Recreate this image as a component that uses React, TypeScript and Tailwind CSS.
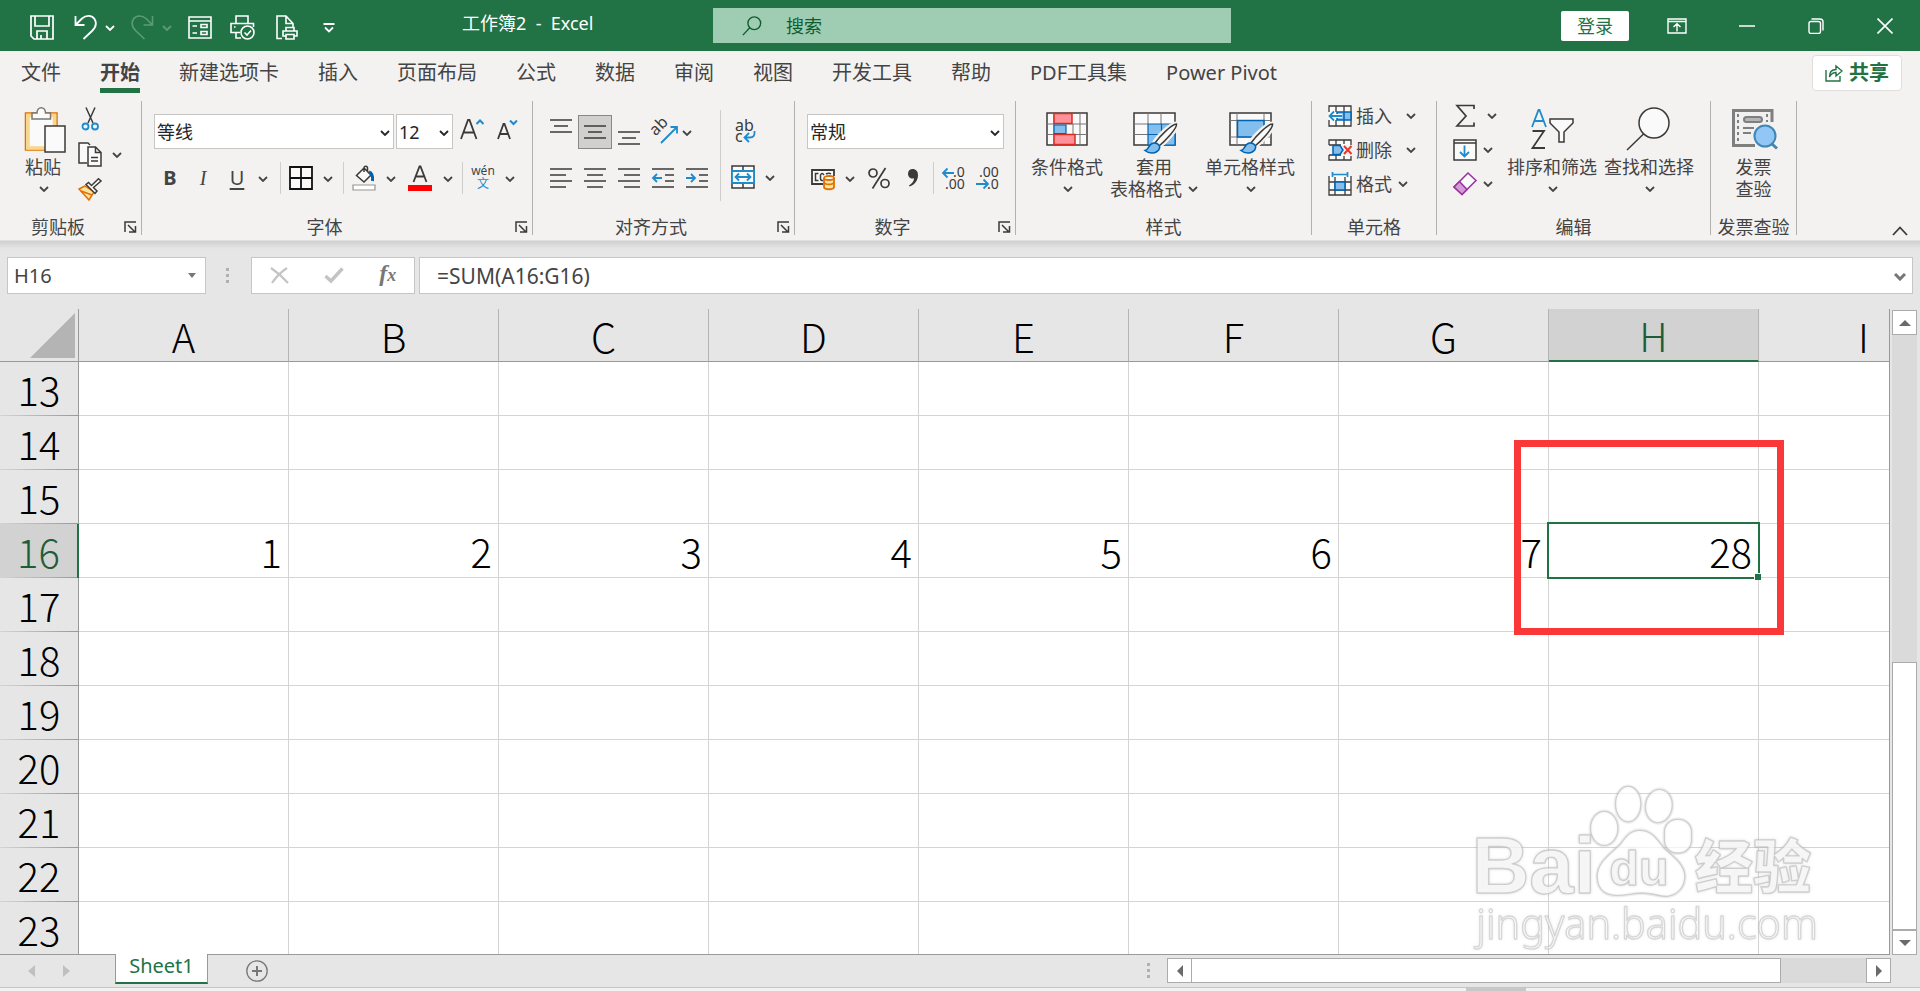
import type { ReactNode } from "react";
import clsx from "clsx";

const TABS = [
  "文件",
  "开始",
  "新建选项卡",
  "插入",
  "页面布局",
  "公式",
  "数据",
  "审阅",
  "视图",
  "开发工具",
  "帮助",
  "PDF工具集",
  "Power Pivot",
];

const COLUMNS = ["A", "B", "C", "D", "E", "F", "G", "H", "I"];
const ROWS = [13, 14, 15, 16, 17, 18, 19, 20, 21, 22, 23];
const CELLS: Record<string, number> = {
  A16: 1,
  B16: 2,
  C16: 3,
  D16: 4,
  E16: 5,
  F16: 6,
  G16: 7,
  H16: 28,
};

const ACTIVE_COLUMN = "H";
const ACTIVE_ROW = 16;

interface IconProps {
  w: number;
  h: number;
  children: ReactNode;
}

function Icon({ w, h, children }: IconProps) {
  return (
    <svg
      width={w}
      height={h}
      viewBox={`0 0 ${w} ${h}`}
      fill="none"
      stroke="#3b3a39"
      strokeWidth="1.5"
      className="shrink-0 overflow-visible"
      aria-hidden="true"
    >
      {children}
    </svg>
  );
}

function Chevron({ className }: { className?: string }) {
  return (
    <svg
      width="10"
      height="6"
      viewBox="0 0 10 6"
      fill="none"
      stroke="currentColor"
      strokeWidth="1.8"
      className={clsx("shrink-0", className)}
      aria-hidden="true"
    >
      <path d="M1 1 L5 5 L9 1" />
    </svg>
  );
}

function Drop({ label, className = "w-[30px]" }: { label: string; className?: string }) {
  return (
    <button
      type="button"
      aria-label={label}
      className={clsx("flex h-8 shrink-0 items-center justify-center pt-0.5", className)}
    >
      <Chevron />
    </button>
  );
}

function Tool({
  label,
  className = "w-[34px]",
  children,
}: {
  label: string;
  className?: string;
  children: ReactNode;
}) {
  return (
    <button
      type="button"
      aria-label={label}
      className={clsx("flex h-[34px] shrink-0 items-center justify-center", className)}
    >
      {children}
    </button>
  );
}

function Sep({ className }: { className?: string }) {
  return <span className={clsx("mr-2 h-8 w-px shrink-0 bg-[#d0cecc]", className)} />;
}

function Group({
  label,
  className,
  launcher = false,
  children,
}: {
  label: string;
  className: string;
  launcher?: boolean;
  children: ReactNode;
}) {
  return (
    <section
      aria-label={label}
      className={clsx("flex h-[134px] shrink-0 flex-col border-r border-[#b3b1af]", className)}
    >
      <div className="flex flex-1">{children}</div>
      <div className="flex h-4 items-center">
        <h2 className={clsx("flex-1 text-center text-lg leading-4", launcher && "pr-2")}>{label}</h2>
        {launcher && (
          <button type="button" aria-label={`${label}设置`} className="mr-1">
            <Icon w={13} h={12}>
              <path d="M1 11 V1 H12" />
              <path d="M4 4 L10.5 10.5 M11.5 5 V11 H5" />
            </Icon>
          </button>
        )}
      </div>
    </section>
  );
}

function BigButton({
  icon,
  lines,
  inlineChevron = false,
  noChevron = false,
}: {
  icon: ReactNode;
  lines: string[];
  inlineChevron?: boolean;
  noChevron?: boolean;
}) {
  return (
    <button type="button" className="flex flex-col items-center pt-1 text-lg leading-[22px]">
      <span className="flex h-[51px] items-center">{icon}</span>
      {lines.map((line, index) => (
        <span key={line} className="flex items-center gap-1.5 whitespace-nowrap">
          {line}
          {inlineChevron && index === lines.length - 1 && <Chevron />}
        </span>
      ))}
      {!inlineChevron && !noChevron && (
        <span className="flex h-[22px] items-center pl-0.5">
          <Chevron />
        </span>
      )}
    </button>
  );
}

function SelectBox({ label, value, className }: { label: string; value: string; className: string }) {
  return (
    <div className={clsx("relative h-[35px] shrink-0", className)}>
      <select
        aria-label={label}
        className="h-full w-full appearance-none border border-[#c8c6c4] bg-white pl-0.5 text-lg text-[#262626]"
      >
        <option>{value}</option>
      </select>
      <Chevron className="pointer-events-none absolute top-4 right-1 text-[#262626]" />
    </div>
  );
}

/* Horizontal rules; each entry is [x1, x2] on a 22px wide canvas. */
function Lines({ rows, gap = 6 }: { rows: number[][]; gap?: number }) {
  return (
    <Icon w={22} h={(rows.length - 1) * gap + 2}>
      {rows.map(([from, to], index) => (
        <path key={index} d={`M${from} ${index * gap + 1} H${to}`} />
      ))}
    </Icon>
  );
}

function Brush() {
  return (
    <g>
      <path
        d="M43 12 C38 12 25 25 22 30 L26 34 C32 30 44 17 44 13 Z"
        fill="#fafafa"
        stroke="#f3f2f1"
        strokeWidth="5"
      />
      <path d="M43.5 12 C39 12 27 24 22 31 L25.5 34.5 C32 29 44.5 16 43.5 12 Z" fill="#fafafa" />
      <path
        d="M12 38.5 C16 38 15 32 20.5 31 C25 30.5 28 34 26 37.5 C23 42 16 42 12 38.5 Z"
        fill="#83beec"
        stroke="#0063b1"
      />
    </g>
  );
}

function QuickAccess() {
  return (
    <div className="flex w-[432px] shrink-0 items-center gap-4">
      <button type="button" aria-label="保存" className="w-7">
        <svg width="24" height="25" viewBox="0 0 24 25" fill="none" stroke="#fff" strokeWidth="1.7">
          <path d="M1 1 H23 V24 H4 L1 21 Z M5 1 V11 H19 V1 M7 24 V16 H17 V24 M11 20 V24" />
        </svg>
      </button>
      <div className="flex w-[41px] items-center gap-2">
        <button type="button" aria-label="撤消">
          <svg width="23" height="25" viewBox="0 0 23 25" fill="none" stroke="#fff" strokeWidth="1.8">
            <path d="M1.5 1 V10 H10.5 M2 9.5 L8 3.5 C12 0 18 0 20.5 4 C23 8 22 12 18 16 L9.5 24" />
          </svg>
        </button>
        <button type="button" aria-label="撤消选项">
          <Chevron />
        </button>
      </div>
      <div className="flex w-[41px] items-center gap-2 text-[#5a9c76]">
        <button type="button" aria-label="恢复">
          <svg
            width="23"
            height="25"
            viewBox="0 0 23 25"
            fill="none"
            stroke="currentColor"
            strokeWidth="1.6"
          >
            <path d="M21.5 1 V10 H12.5 M21 9.5 L15 3.5 C11 0 5 0 2.5 4 C0 8 1 12 5 16 L13.5 24" />
          </svg>
        </button>
        <button type="button" aria-label="恢复选项">
          <Chevron />
        </button>
      </div>
      <button type="button" aria-label="表单" className="w-[26px]">
        <svg width="24" height="23" viewBox="0 0 24 23" fill="none" stroke="#fff" strokeWidth="1.6">
          <path d="M1 1 H23 V22 H1 Z M1 5 H23 M4.5 10 H9 M4.5 17 H9" />
          <path d="M13 8.5 H19 V11.5 H13 Z M13 15.5 H19 V18.5 H13 Z" />
        </svg>
      </button>
      <button type="button" aria-label="打印预览" className="w-[30px]">
        <svg width="25" height="25" viewBox="0 0 25 25" fill="none" stroke="#fff" strokeWidth="1.6">
          <path d="M6 8 V1 H18 V8 M10 17.5 H6 V23 H11 M6 17.5 H1 V8.5 H23.5 V12 M4 12 H5.5" />
          <circle cx="17.5" cy="17.5" r="6.5" />
          <path d="M14.5 17.5 L17 20 L21 15.5" />
        </svg>
      </button>
      <button type="button" aria-label="快速打印" className="w-[31px]">
        <svg width="22" height="25" viewBox="0 0 22 25" fill="none" stroke="#fff" strokeWidth="1.6">
          <path d="M6 23.5 H1 V1 H10 L17 8.5 V12 M10 1 V8.5 H17" />
          <path d="M10 16 V12.5 H18 V16 M10 21 H7 V16 H21 V21 H18 M10 19.5 H18 V24 H10 Z" />
        </svg>
      </button>
      <button type="button" aria-label="自定义快速访问工具栏">
        <svg width="12" height="10" viewBox="0 0 12 10" fill="none" stroke="#fff" strokeWidth="1.8">
          <path d="M0.5 1 H11.5 M2 4.5 L6 8.5 L10 4.5" />
        </svg>
      </button>
    </div>
  );
}

function TitleBar() {
  return (
    <header className="flex h-[51px] shrink-0 items-center bg-[#217346] text-white">
      <div className="flex w-[713px] shrink-0 items-center pt-1 pl-[30px]">
        <QuickAccess />
        <h1 className="pb-2.5 text-lg leading-6 whitespace-pre">{"工作簿2  -  Excel"}</h1>
      </div>
      <label className="flex h-[35px] w-[27%] items-center bg-[#9fcdb3] pl-[29px] text-[#0f5c2f]">
        <svg width="22" height="22" viewBox="0 0 22 22" fill="none" stroke="currentColor" strokeWidth="1.5">
          <circle cx="13.5" cy="8" r="7" />
          <path d="M8.5 13 L1 21" />
        </svg>
        <input
          type="text"
          aria-label="搜索"
          placeholder="搜索"
          className="ml-6 w-full min-w-0 bg-transparent text-lg outline-none placeholder:text-[#0f5c2f]"
        />
      </label>
      <div className="ml-auto flex items-center pr-[27px]">
        <button
          type="button"
          className="mr-[38px] h-[30px] w-[68px] rounded-xs bg-white text-lg leading-[30px] text-[#217346]"
        >
          登录
        </button>
        <button type="button" aria-label="功能区显示选项" className="mr-[52px]">
          <svg width="20" height="16" viewBox="0 0 20 16" fill="none" stroke="#fff" strokeWidth="1.4">
            <path d="M1 1 H19 V15 H1 Z M1 3.5 H19 M10 13.5 V6 M6.5 9 L10 5.8 L13.5 9" />
          </svg>
        </button>
        <button type="button" aria-label="最小化" className="mr-[53px]">
          <svg width="16" height="16" viewBox="0 0 16 16" fill="none" stroke="#fff" strokeWidth="1.5">
            <path d="M0 8 H16" />
          </svg>
        </button>
        <button type="button" aria-label="还原" className="mr-[53px]">
          <svg width="16" height="16" viewBox="0 0 16 16" fill="none" stroke="#fff" strokeWidth="1.4">
            <rect x="1" y="3.5" width="11.5" height="12" rx="2" />
            <path d="M3.5 1 H12 Q15 1 15 4 V12.5" />
          </svg>
        </button>
        <button type="button" aria-label="关闭">
          <svg width="16" height="16" viewBox="0 0 16 16" fill="none" stroke="#fff" strokeWidth="1.6">
            <path d="M0.5 0.5 L15.5 15.5 M15.5 0.5 L0.5 15.5" />
          </svg>
        </button>
      </div>
    </header>
  );
}

function TabBar() {
  return (
    <div className="flex h-11 shrink-0 items-center pr-[18px] pl-[21px]">
      <nav className="flex h-full gap-[39px] text-xl">
        {TABS.map((tab) => (
          <button
            key={tab}
            type="button"
            className={clsx("flex h-full items-center whitespace-nowrap", tab === "开始" && "font-bold")}
          >
            <span
              className={clsx(
                "flex h-10 items-center border-y-[5px] border-transparent",
                tab === "开始" && "border-b-[#217346]"
              )}
            >
              {tab}
            </span>
          </button>
        ))}
      </nav>
      <button
        type="button"
        className="ml-auto flex h-9 w-[90px] items-center justify-center gap-1.5 rounded border border-[#e1dfdd] bg-white text-xl font-bold text-[#217346]"
      >
        <svg width="18" height="18" viewBox="0 0 18 18" fill="none" stroke="currentColor" strokeWidth="1.4">
          <path d="M1 6 V17 H15 V12 M4.5 13 C4.5 8 7 5.5 11 5.5 V2 L17 7 L11 12 V8.5 C8 8.5 6 10 4.5 13 Z" />
        </svg>
        共享
      </button>
    </div>
  );
}

function ClipboardGroup() {
  return (
    <Group label="剪贴板" className="w-[142px]" launcher>
      <div className="pl-[23px]">
        <BigButton
          lines={["粘贴"]}
          icon={
            <Icon w={40} h={48}>
              <path d="M2.5 6 H34 V43 H2.5 Z" fill="#fff" stroke="#e07000" />
              <path d="M5 8.5 H31.5 V41 H5 Z" fill="#fafafa" stroke="#f8d888" strokeWidth="3.5" />
              <path d="M9 12 V6 H14 C14 -1 22.5 -1 22.5 6 H27.5 V12 Z" fill="#fafafa" stroke="#797775" />
              <path d="M22 19 H42 V45 H22 Z" fill="#fafafa" />
            </Icon>
          }
        />
      </div>
      <div className="flex flex-col gap-px pt-px pl-[15px]">
        <Tool label="剪切" className="w-6">
          <Icon w={24} h={24}>
            <path d="M8 0.5 L15 16 M17 0.5 L10 16" />
            <circle cx="7.5" cy="19.5" r="3" stroke="#1e8bcd" strokeWidth="1.8" />
            <circle cx="17" cy="19.5" r="3" stroke="#1e8bcd" strokeWidth="1.8" />
          </Icon>
        </Tool>
        <div className="flex items-center">
          <Tool label="复制" className="w-6">
            <Icon w={24} h={25}>
              <path d="M9 21 H1 V1 H10 L12 3" fill="#fafafa" />
              <path d="M10 5 H17.5 L23 10.5 V24 H10 Z" fill="#fafafa" />
              <path d="M17.5 5 V10.5 H23 M13 15.5 H20 M13 19 H20" />
            </Icon>
          </Tool>
          <Drop label="复制选项" />
        </div>
        <Tool label="格式刷" className="w-6">
          <Icon w={24} h={23}>
            <path d="M7 8 L1 11 L11 22 L16 14 Z" fill="#fbe3a6" stroke="#e07000" />
            <path d="M3 13 L14 17" stroke="#e07000" />
            <path d="M8 6.5 L17 15.5 L19 13 L15.5 9.5 L23 3 L20.5 0.8 L13.5 7.5 L10.5 4.5 Z" fill="#fafafa" />
          </Icon>
        </Tool>
      </div>
    </Group>
  );
}

function FontGroup() {
  return (
    <Group label="字体" className="w-[391px]" launcher>
      <div className="flex flex-col gap-3 pt-[13px] pl-3">
        <div className="flex items-center">
          <SelectBox label="字体名称" value="等线" className="mr-0.5 w-[240px]" />
          <SelectBox label="字号" value="12" className="w-[57px]" />
          <Tool label="增大字号" className="w-[38px]">
            <Icon w={24} h={26}>
              <path d="M1 20 L8 1 H9.5 L16.5 20 M3.5 13.5 H14" strokeWidth="1.8" />
              <path d="M16.5 5 L20 1.5 L23.5 5" stroke="#1e8bcd" strokeWidth="2" />
            </Icon>
          </Tool>
          <Tool label="减小字号" className="w-8">
            <Icon w={20} h={26}>
              <path d="M1 20 L6.5 5 H7.5 L13 20 M3 15 H11" strokeWidth="1.8" />
              <path d="M13 1.5 L16.5 5 L20 1.5" stroke="#1e8bcd" strokeWidth="2" />
            </Icon>
          </Tool>
        </div>
        <div className="flex items-center">
          <Tool label="加粗" className="w-8">
            <span className="text-xl leading-6 font-bold">B</span>
          </Tool>
          <Tool label="倾斜">
            <span className="font-['Liberation_Serif',serif] text-xl leading-6 italic">I</span>
          </Tool>
          <Tool label="下划线">
            <span className="text-xl leading-6 underline underline-offset-3">U</span>
          </Tool>
          <Drop label="下划线样式" className="w-[18px]" />
          <Sep className="ml-2" />
          <Tool label="边框" className="w-6">
            <Icon w={24} h={24}>
              <path d="M1 1 H23 V23 H1 Z M12 1 V23 M1 12 H23" fill="#fafafa" stroke="#111" strokeWidth="1.8" />
            </Icon>
          </Tool>
          <Drop label="边框选项" />
          <Sep />
          <Tool label="填充颜色" className="w-6">
            <Icon w={24} h={26}>
              <path d="M12 3 L19 10 L12 17 L4.5 10.5 Z M12 7 V3 C12 0.5 15.5 0.5 15.5 3 V7" fill="#fafafa" />
              <path d="M17 7 C20 8 21 11 20.5 16" stroke="#0063b1" strokeWidth="3" />
              <path d="M1 20 H23 V25 H1 Z" fill="#fff" stroke="#979593" strokeWidth="1.2" />
            </Icon>
          </Tool>
          <Drop label="填充颜色选项" />
          <Tool label="字体颜色" className="w-7">
            <Icon w={24} h={26}>
              <path d="M5.5 17 L11.5 1.5 H12.5 L18.5 17 M7.5 11.5 H16.5" strokeWidth="1.8" />
              <path d="M0 20 H24 V26 H0 Z" fill="#f00" stroke="none" />
            </Icon>
          </Tool>
          <Drop label="字体颜色选项" className="w-7" />
          <Sep />
          <Tool label="拼音" className="w-6 flex-col">
            <span className="text-xs leading-3">wén</span>
            <span className="text-xs leading-[14px] text-[#1e8bcd]">文</span>
          </Tool>
          <Drop label="拼音选项" />
        </div>
      </div>
    </Group>
  );
}

function AlignGroup() {
  return (
    <Group label="对齐方式" className="w-[262px]" launcher>
      <div className="flex w-[187px] flex-col gap-3 pt-[13px] pl-[11px]">
        <div className="flex h-[35px] items-center">
          <Tool label="顶端对齐" className="w-[34px] pb-3">
            <Lines rows={[[0, 22], [4, 18], [0, 22]]} />
          </Tool>
          <Tool label="垂直居中" className="w-[34px] border border-[#8a8886] bg-[#d2d0ce]">
            <Lines rows={[[0, 22], [4, 18], [0, 22]]} />
          </Tool>
          <Tool label="底端对齐" className="w-[34px] pt-3">
            <Lines rows={[[0, 22], [4, 18], [0, 22]]} />
          </Tool>
          <Tool label="方向" className="w-9">
            <Icon w={25} h={26}>
              <text
                x="3"
                y="16"
                transform="rotate(-45 5 16)"
                fontSize="16"
                fill="#3b3a39"
                stroke="none"
              >
                ab
              </text>
              <path d="M9 24 L24.5 8.5 M18.5 8 H25 V14.5" stroke="#1e8bcd" strokeWidth="1.8" />
            </Icon>
          </Tool>
          <Drop label="方向选项" className="w-2.5" />
        </div>
        <div className="flex items-center">
          <Tool label="左对齐">
            <Lines rows={[[0, 22], [0, 16], [0, 22], [0, 16]]} />
          </Tool>
          <Tool label="居中">
            <Lines rows={[[0, 22], [3, 19], [0, 22], [3, 19]]} />
          </Tool>
          <Tool label="右对齐">
            <Lines rows={[[0, 22], [6, 22], [0, 22], [6, 22]]} />
          </Tool>
          <Tool label="减少缩进量">
            <Icon w={22} h={20}>
              <path d="M0 1 H22 M13 7 H22 M13 13 H22 M0 19 H22" />
              <path d="M10 10 H1 M5 6 L1 10 L5 14" stroke="#1e8bcd" strokeWidth="1.8" />
            </Icon>
          </Tool>
          <Tool label="增加缩进量">
            <Icon w={22} h={20}>
              <path d="M0 1 H22 M13 7 H22 M13 13 H22 M0 19 H22" />
              <path d="M0 10 H9 M5 6 L9 10 L5 14" stroke="#1e8bcd" strokeWidth="1.8" />
            </Icon>
          </Tool>
        </div>
      </div>
      <span className="mt-[9px] mr-2.5 h-[91px] w-px bg-[#d0cecc]" />
      <div className="flex flex-col gap-3 pt-[13px]">
        <Tool label="自动换行" className="w-7">
          <Icon w={20} h={24}>
            <text x="0" y="12" fontSize="16" fill="#3b3a39" stroke="none">ab</text>
            <text x="0" y="23" fontSize="16" fill="#3b3a39" stroke="none">c</text>
            <path
              d="M19.5 12 V14 Q19.5 18.5 15 18.5 H9.5 M14 14 L9.5 18.5 L14 23"
              stroke="#1e8bcd"
              strokeWidth="1.8"
            />
          </Icon>
        </Tool>
        <div className="flex items-center">
          <Tool label="合并后居中" className="w-6">
            <Icon w={24} h={24}>
              <path d="M1 1 H23 V23 H1 Z M12 1 V5 M12 19 V23" fill="#fafafa" />
              <path d="M1 6 H23 V18 H1 Z" fill="#fafafa" stroke="#1e8bcd" strokeWidth="1.8" />
              <path d="M4.5 12 H19.5 M8 8.5 L4.5 12 L8 15.5 M16 8.5 L19.5 12 L16 15.5" stroke="#1e8bcd" strokeWidth="1.8" />
            </Icon>
          </Tool>
          <Drop label="合并选项" />
        </div>
      </div>
    </Group>
  );
}

function NumberGroup() {
  return (
    <Group label="数字" className="w-[221px]" launcher>
      <div className="flex flex-col gap-3 pt-[13px] pl-3">
        <SelectBox label="数字格式" value="常规" className="w-[197px]" />
        <div className="flex items-center pl-1">
          <Tool label="会计数字格式" className="w-6">
            <Icon w={24} h={18}>
              <path d="M12 15 H1 V1 H23 V7" fill="#fafafa" strokeWidth="1.8" />
              <path d="M7.5 4.5 H4.5 V11.5 H7.5 M13 6 Q11 3 9.5 6 V10 Q10 12 12 11.5 M15 5 Q18 3.5 20 5" />
              <path d="M13 9 V18 C13 21 23 21 23 18 V9" fill="#fbe3a6" stroke="#e07000" strokeWidth="1.8" />
              <ellipse cx="18" cy="9" rx="5" ry="2" fill="#fff" stroke="#e07000" strokeWidth="1.8" />
              <path d="M13 13.5 C14 16 22 16 23 13.5" stroke="#e07000" strokeWidth="1.8" />
            </Icon>
          </Tool>
          <Drop label="会计格式选项" />
          <Tool label="百分比样式" className="w-7">
            <Icon w={22} h={22}>
              <circle cx="5" cy="6" r="4" strokeWidth="1.7" />
              <circle cx="17" cy="16.5" r="4" strokeWidth="1.7" />
              <path d="M17.5 1 L4.5 21.5" strokeWidth="1.7" />
            </Icon>
          </Tool>
          <Tool label="千位分隔样式" className="w-10">
            <Icon w={12} h={20}>
              <path
                d="M5.5 1 C9 1 11 3.5 11 7 C11 12.5 8 16.5 2.5 18.5 L2 17.5 C5.5 15.5 7 13 7 10.3 C4 11.5 1 9 1 5.8 C1 3 3 1 5.5 1 Z"
                fill="#3b3a39"
                stroke="none"
              />
            </Icon>
          </Tool>
          <Sep />
          <Tool label="增加小数位数" className="w-6">
            <Icon w={24} h={24}>
              <path d="M12 7 H1 M5.5 2.5 L1 7 L5.5 11.5" stroke="#1e8bcd" strokeWidth="1.8" />
              <text x="11" y="11" fontSize="14" fill="#3b3a39" stroke="none">.0</text>
              <text x="3" y="23" fontSize="14" fill="#3b3a39" stroke="none">.00</text>
            </Icon>
          </Tool>
          <Tool label="减少小数位数" className="ml-2.5 w-6">
            <Icon w={24} h={24}>
              <text x="3" y="11" fontSize="14" fill="#3b3a39" stroke="none">.00</text>
              <text x="11" y="23" fontSize="14" fill="#3b3a39" stroke="none">.0</text>
              <path d="M0 18 H12 M7.5 13.5 L12 18 L7.5 22.5" stroke="#1e8bcd" strokeWidth="1.8" />
            </Icon>
          </Tool>
        </div>
      </div>
    </Group>
  );
}

function StylesGroup() {
  return (
    <Group label="样式" className="w-[296px]">
      <div className="flex items-start gap-[7px] pl-[15px]">
        <BigButton
          lines={["条件格式"]}
          icon={
            <Icon w={42} h={38}>
              <path d="M1 1 H41 V33 H1 Z" fill="#fafafa" />
              <path d="M8 1 V33 M27 12 V22 M34 1 V33 M1 12 H41 M1 22.5 H41" stroke="#797775" strokeWidth="1" />
              <path d="M8 1.5 H26 V11.5 H8 Z M8 22.5 H29 V32.5 H8 Z" fill="#ff9199" stroke="#d92c20" />
              <path d="M8 13 H20 V21.5 H8 Z" fill="#83beec" stroke="#0063b1" strokeWidth="1.2" />
            </Icon>
          }
        />
        <BigButton
          lines={["套用", "表格格式"]}
          inlineChevron
          icon={
            <Icon w={42} h={38}>
              <path d="M1 1 H42 V33 H1 Z" fill="#fafafa" />
              <path d="M15 12 H42 V33 H15 Z" fill="#83beec" stroke="none" />
              <path d="M15 1 V12 M28 1 V12 M1 12 H15 M1 22.5 H15" stroke="#797775" strokeWidth="1" />
              <path d="M15 12 H42 V33 H15 Z M15 22.5 H42 M28.5 12 V33" stroke="#0063b1" strokeWidth="1.2" />
              <Brush />
            </Icon>
          }
        />
        <BigButton
          lines={["单元格样式"]}
          icon={
            <Icon w={42} h={38}>
              <path d="M1 1 H42 V33 H1 Z" fill="#fafafa" />
              <path d="M8 1 V33 M35 1 V33 M1 8.5 H42 M1 25 H42" stroke="#797775" strokeWidth="1" />
              <path d="M8.5 8.5 H35 V25 H8.5 Z" fill="#83beec" stroke="#0063b1" />
              <Brush />
            </Icon>
          }
        />
      </div>
    </Group>
  );
}

function CellsGroup() {
  return (
    <Group label="单元格" className="w-[125px]">
      <div className="flex flex-col gap-1 pl-4 text-lg">
        <button type="button" className="flex h-[30px] items-center gap-1">
          <Icon w={24} h={22}>
            <path d="M1 7 V1 H23 V21 H1 V15 M1 1 H23 M1 21 H23 M8 1 V7 M16 1 V7 M8 15 V21 M16 15 V21" fill="#fafafa" strokeWidth="1.3" />
            <path d="M9 7 H23 V15 H9 Z M16 7 V15" fill="#83beec" stroke="#0063b1" />
            <path d="M14 11 H1.5 M6 6.5 L1.5 11 L6 15.5" stroke="#fafafa" strokeWidth="4" />
            <path d="M14 11 H1.5 M6 6.5 L1.5 11 L6 15.5" stroke="#1e8bcd" strokeWidth="1.8" />
          </Icon>
          插入
          <Chevron className="ml-2.5" />
        </button>
        <button type="button" className="flex h-[30px] items-center gap-1">
          <Icon w={24} h={22}>
            <path d="M1 6 V1 H23 V6 M1 16 V21 H23 V17 M1 6 H13 M1 16 H13 M8 1 V6 M16 1 V5 M8 16 V21 M16 17 V21" fill="#fafafa" strokeWidth="1.3" />
            <path d="M5 6.5 H12 L15 11 L12 15.5 H5 Z" fill="#83beec" stroke="#0063b1" />
            <path d="M16 7 L23.5 15 M23.5 7 L16 15" stroke="#e8362d" strokeWidth="2" />
          </Icon>
          删除
          <Chevron className="ml-2.5" />
        </button>
        <button type="button" className="flex h-[30px] items-center gap-1">
          <Icon w={24} h={24}>
            <path d="M1 4 V23 H23 V4 M1 10 H23 M1 18 H23 M7 5 V23 M17 5 V23" fill="#fafafa" strokeWidth="1.3" />
            <path d="M7 10 H17 V18 H7 Z" fill="#83beec" stroke="#0063b1" />
            <path d="M4.5 2.5 H19.5 M4.5 0 V5 M19.5 0 V5" stroke="#1e8bcd" strokeWidth="1.7" />
          </Icon>
          格式
          <Chevron className="ml-0.5" />
        </button>
      </div>
    </Group>
  );
}

function EditGroup() {
  return (
    <Group label="编辑" className="w-[274px]">
      <div className="flex flex-col gap-1 pl-4">
        <button type="button" aria-label="自动求和" className="flex h-[30px] items-center gap-2.5">
          <Icon w={24} h={24}>
            <path d="M21 5 V1.5 H4 L13 12 L4 22 H21 V18.5" strokeWidth="1.7" />
          </Icon>
          <Chevron />
        </button>
        <button type="button" aria-label="填充" className="flex h-[30px] items-center gap-1.5">
          <Icon w={24} h={22}>
            <path d="M1 1 H23 V21 H1 Z M1 4 H23" fill="#fafafa" />
            <path d="M11.5 6.5 V17.5 M7 13 L11.5 17.5 L16 13" stroke="#1e8bcd" strokeWidth="1.8" />
          </Icon>
          <Chevron />
        </button>
        <button type="button" aria-label="清除" className="flex h-[30px] items-center gap-1.5">
          <Icon w={24} h={24}>
            <path d="M15 1 L23 8.5 L9 22.5 L1 15 Z" fill="#fafafa" stroke="#98309c" />
            <path d="M6.5 9.5 L14 17.5 L9 22.5 L1 15 Z" fill="#d59ad8" stroke="#98309c" />
          </Icon>
          <Chevron />
        </button>
      </div>
      <div className="flex items-start gap-[7px] pl-2.5">
        <BigButton
          lines={["排序和筛选"]}
          icon={
            <Icon w={43} h={46}>
              <path d="M1 19 L7.5 2 H8.5 L15 19 M3 13 H13" stroke="#1e8bcd" strokeWidth="1.8" />
              <path d="M1.5 23 H13 L1.5 40 H14" strokeWidth="1.8" />
              <path d="M19 11 H42 V15 L33 24 V34 H28 V24 L19 15 Z" fill="#fafafa" />
            </Icon>
          }
        />
        <BigButton
          lines={["查找和选择"]}
          icon={
            <Icon w={44} h={48}>
              <circle cx="27" cy="16" r="15" fill="#fafafa" />
              <path d="M16.5 27 L0 43" />
            </Icon>
          }
        />
      </div>
    </Group>
  );
}

function InvoiceGroup() {
  return (
    <Group label="发票查验" className="w-[86px]">
      <div className="flex flex-1 items-start justify-center">
        <BigButton
          lines={["发票", "查验"]}
          noChevron
          icon={
            <Icon w={48} h={46}>
              <path d="M42 14 V2.5 H3.5 V37.5 H25" fill="#f0f0f0" stroke="#7f7f7f" strokeWidth="3" />
              <path d="M8 6 V35 M37 6 V14" stroke="#7f7f7f" strokeWidth="2" strokeDasharray="3 3" />
              <rect x="14" y="9" width="18" height="5" rx="2.5" fill="#b5b5b5" stroke="#7f7f7f" strokeWidth="2" />
              <path d="M13 20 H24 M13 25 H21" stroke="#7f7f7f" strokeWidth="2" />
              <circle cx="35" cy="28" r="10.5" fill="#92c7f5" stroke="#3f87b5" strokeWidth="2" />
              <path d="M42 36 L47 40.5" stroke="#3f87b5" strokeWidth="3" />
            </Icon>
          }
        />
      </div>
    </Group>
  );
}

function FormulaBar() {
  return (
    <div className="flex h-[68px] shrink-0 items-start bg-linear-to-b from-[#cfcfcf] to-[#e6e6e6] to-[8px] px-[7px] pt-4 text-xl text-[#444]">
      <div className="relative h-[37px] w-[199px] shrink-0">
        <input
          type="text"
          aria-label="名称框"
          defaultValue="H16"
          className="h-full w-full border border-[#c6c6c6] bg-white pl-1.5 outline-none"
        />
        <svg
          width="8"
          height="5"
          className="pointer-events-none absolute top-4 right-2.5"
          fill="#777"
          aria-hidden="true"
        >
          <path d="M0 0 H8 L4 5 Z" />
        </svg>
      </div>
      <span className="flex h-[37px] w-[45px] flex-col items-center justify-center gap-[3px] pr-0.5">
        <span className="h-[3px] w-[3px] bg-[#b0b0b0]" />
        <span className="h-[3px] w-[3px] bg-[#b0b0b0]" />
        <span className="h-[3px] w-[3px] bg-[#b0b0b0]" />
      </span>
      <div className="mr-1 flex h-[37px] w-[164px] shrink-0 items-center justify-around border border-[#c6c6c6] bg-white">
        <button type="button" aria-label="取消">
          <svg width="19" height="17" viewBox="0 0 19 17" fill="none" stroke="#c4c4c4" strokeWidth="2.2">
            <path d="M1 1 Q10 7 18 16 M17 1 Q8 7 2 16" />
          </svg>
        </button>
        <button type="button" aria-label="输入">
          <svg width="20" height="17" viewBox="0 0 20 17" fill="none" stroke="#c4c4c4" strokeWidth="3.5">
            <path d="M1.5 9 L7 14 L18.5 1.5" />
          </svg>
        </button>
        <button
          type="button"
          className="pb-1 font-['Liberation_Serif',serif] text-2xl leading-7 font-bold text-[#777] italic"
        >
          f<span className="text-lg">x</span>
        </button>
      </div>
      <div className="relative h-[37px] flex-1">
        <input
          type="text"
          aria-label="编辑栏"
          defaultValue="=SUM(A16:G16)"
          className="h-full w-full border border-[#c6c6c6] bg-white pl-[17px] text-[21px] outline-none"
        />
        <svg
          width="12"
          height="8"
          viewBox="0 0 12 8"
          fill="none"
          stroke="#777"
          strokeWidth="3"
          className="pointer-events-none absolute top-4 right-[7px]"
          aria-hidden="true"
        >
          <path d="M1 1 L6 6 L11 1" />
        </svg>
      </div>
    </div>
  );
}

function PawShapes() {
  return (
    <>
      <ellipse cx="496" cy="206" rx="41" ry="51" />
      <ellipse cx="568" cy="133" rx="38" ry="53" />
      <ellipse cx="660" cy="139" rx="40" ry="50" transform="rotate(8 660 139)" />
      <rect x="677" y="179" width="81" height="101" rx="38" />
      <path d="M602 212 C570 212 555 240 545 253 C520 280 475 305 475 350 C475 395 505 410 545 407 C575 404 590 400 610 400 C640 400 660 410 685 410 C720 405 738 380 738 348 C735 310 700 290 675 265 C655 240 640 212 602 212 Z" />
    </>
  );
}

/* The paw is drawn twice: a wide faint stroke for the glow, then the outline itself. */
function Watermark() {
  return (
    <svg
      width="353"
      height="170"
      viewBox="90 70 1060 510"
      className="pointer-events-none absolute right-[67px] bottom-px overflow-visible"
      fill="#fff"
      fillOpacity="0.7"
      stroke="#b8b8b8"
      strokeOpacity="0.6"
      strokeWidth="4"
      strokeLinejoin="round"
    >
      <g fill="none" strokeOpacity="0.25" strokeWidth="12">
        <PawShapes />
      </g>
      <PawShapes />
      <g className="drop-shadow-[0_0_5px_rgba(140,140,140,0.4)]">
        <text x="98" y="400" className="font-['Liberation_Sans',sans-serif] text-[240px] font-bold">
          Bai
        </text>
        <text x="511" y="375" className="font-['Liberation_Sans',sans-serif] text-[146px] font-bold">
          du
        </text>
        <text x="768" y="385" className="font-['Noto_Sans_CJK_SC',sans-serif] text-[175px] font-black">
          经验
        </text>
      </g>
      <text
        x="112"
        y="538"
        strokeOpacity="0.5"
        className="font-['Noto_Sans',sans-serif] text-[124px] drop-shadow-[0_0_4px_rgba(140,140,140,0.25)]"
      >
        jingyan.baidu.com
      </text>
    </svg>
  );
}

function Sheet() {
  return (
    <div className="relative min-w-0 flex-1 overflow-hidden border-r border-b border-[#999] bg-[#e6e6e6] font-['Noto_Sans_CJK_SC',sans-serif] font-light text-black">
      <table className="w-[1969px] table-fixed border-separate border-spacing-0 text-[40px] leading-[50px]">
        <colgroup>
          <col className="w-[79px]" />
          {COLUMNS.map((column) => (
            <col key={column} className="w-[210px]" />
          ))}
        </colgroup>
        <thead>
          <tr className="h-[53px]">
            <th aria-label="全选" className="border-r border-b border-[#999] p-0">
              <svg width="45" height="45" viewBox="0 0 45 45" className="mr-[3px] ml-auto" aria-hidden="true">
                <path d="M45 0 V45 H0 Z" fill="#b4b4b4" />
              </svg>
            </th>
            {COLUMNS.map((column) => (
              <th
                key={column}
                scope="col"
                className={clsx(
                  "border-r border-r-[#b4b4b4] p-0 pt-px font-light",
                  column === ACTIVE_COLUMN
                    ? "border-b-2 border-b-[#217346] bg-[#d2d2d2] text-[#1e5c3a]"
                    : "border-b border-b-[#999]"
                )}
              >
                {column}
              </th>
            ))}
          </tr>
        </thead>
        <tbody>
          {ROWS.map((row) => (
            <tr key={row} className="h-[54px]">
              <th
                scope="row"
                className={clsx(
                  "border-r bg-[linear-gradient(to_right,#d4d4d4,#999)] bg-[length:100%_1px] bg-bottom bg-no-repeat p-0 font-light",
                  row === ACTIVE_ROW
                    ? "border-r-2 border-[#217346] bg-[#d2d2d2] text-[#1e5c3a]"
                    : "border-[#999]"
                )}
              >
                {row}
              </th>
              {COLUMNS.map((column) => {
                const isActive = column === ACTIVE_COLUMN && row === ACTIVE_ROW;
                return (
                  <td
                    key={column}
                    className={clsx(
                      "border-r border-b border-[#d4d4d4] bg-white p-0 pr-1.5 text-right",
                      isActive && "relative"
                    )}
                  >
                    {CELLS[`${column}${row}`]}
                    {isActive && (
                      <>
                        <span className="absolute -inset-0.5 border-2 border-[#217346]" />
                        <span className="absolute -right-[3px] -bottom-[3px] h-[7px] w-[7px] border-t border-l border-white bg-[#217346]" />
                        <span className="absolute -top-[84px] -left-[35px] h-[195px] w-[270px] border-[7px] border-[#fb3838]" />
                      </>
                    )}
                  </td>
                );
              })}
            </tr>
          ))}
        </tbody>
      </table>
      <Watermark />
    </div>
  );
}

function ScrollButton({ label, path }: { label: string; path: string }) {
  return (
    <button
      type="button"
      aria-label={label}
      className="flex h-[25px] w-[25px] shrink-0 items-center justify-center border border-[#ababab] bg-white"
    >
      <svg width="12" height="12" viewBox="0 0 12 12" fill="#6a6a6a" aria-hidden="true">
        <path d={path} />
      </svg>
    </button>
  );
}

function SheetTabs() {
  return (
    <footer className="flex h-8 shrink-0 items-start">
      <div className="flex h-8 w-[115px] items-center gap-7 pl-7">
        <button type="button" aria-label="上一个工作表">
          <svg width="7" height="12" fill="#c0c0c0" aria-hidden="true">
            <path d="M7 0 V12 L0 6 Z" />
          </svg>
        </button>
        <button type="button" aria-label="下一个工作表">
          <svg width="7" height="12" fill="#c0c0c0" aria-hidden="true">
            <path d="M0 0 V12 L7 6 Z" />
          </svg>
        </button>
      </div>
      <button
        type="button"
        className="relative -mt-px h-[30px] w-[93px] border-x border-b-2 border-x-[#999] border-b-[#217346] bg-white pb-1 text-xl leading-6 text-[#217346]"
      >
        Sheet1
      </button>
      <button type="button" aria-label="新工作表" className="ml-[38px] pt-[5px]">
        <svg width="22" height="22" viewBox="0 0 22 22" fill="none" stroke="#777" aria-hidden="true">
          <circle cx="11" cy="11" r="10.2" strokeWidth="1.3" />
          <path d="M11 6 V16 M6 11 H16" strokeWidth="2" />
        </svg>
      </button>
      <div className="ml-auto flex w-[773px] items-center pt-[3px] pr-[29px]">
        <span className="mr-[17px] flex flex-col gap-[3px]">
          <span className="h-[3px] w-[3px] bg-[#b0b0b0]" />
          <span className="h-[3px] w-[3px] bg-[#b0b0b0]" />
          <span className="h-[3px] w-[3px] bg-[#b0b0b0]" />
        </span>
        <ScrollButton label="向左滚动" path="M9 0 V12 L3 6 Z" />
        <div className="flex h-[25px] flex-1 bg-[#dadada]">
          <div className="h-full w-[589px] border border-l-0 border-[#ababab] bg-white" />
        </div>
        <ScrollButton label="向右滚动" path="M3 0 V12 L9 6 Z" />
      </div>
    </footer>
  );
}

export default function App() {
  return (
    <div className="flex h-screen flex-col overflow-hidden bg-[#e6e6e6] font-['Noto_Sans','Noto_Sans_CJK_SC',sans-serif] text-[#444]">
      <TitleBar />
      <div className="shrink-0 border-b border-[#e1dfdd] bg-[#f3f2f1]">
        <TabBar />
        <div className="flex h-[145px] items-start pt-1.5">
          <ClipboardGroup />
          <FontGroup />
          <AlignGroup />
          <NumberGroup />
          <StylesGroup />
          <CellsGroup />
          <EditGroup />
          <InvoiceGroup />
          <button type="button" aria-label="折叠功能区" className="mt-auto mr-3 mb-1 ml-auto">
            <svg width="16" height="10" viewBox="0 0 16 10" fill="none" stroke="#3b3a39" strokeWidth="1.8">
              <path d="M1 9 L8 1.5 L15 9" />
            </svg>
          </button>
        </div>
      </div>
      <FormulaBar />
      <main className="flex min-h-0 flex-1">
        <Sheet />
        <div className="ml-0.5 flex w-7 shrink-0 flex-col pt-px">
          <ScrollButton label="向上滚动" path="M0 9 H12 L6 3 Z" />
          <div className="flex w-[25px] flex-1 flex-col justify-end bg-[#dadada]">
            <div className="h-[45%] w-full border border-[#ababab] bg-white" />
          </div>
          <ScrollButton label="向下滚动" path="M0 3 H12 L6 9 Z" />
        </div>
      </main>
      <SheetTabs />
      <div className="flex h-1 shrink-0 justify-end border-t border-[#c6c6c6] bg-[#f3f2f1] pr-[394px]">
        <span className="h-full w-[60px] bg-[#c8c8c8]" />
      </div>
    </div>
  );
}
